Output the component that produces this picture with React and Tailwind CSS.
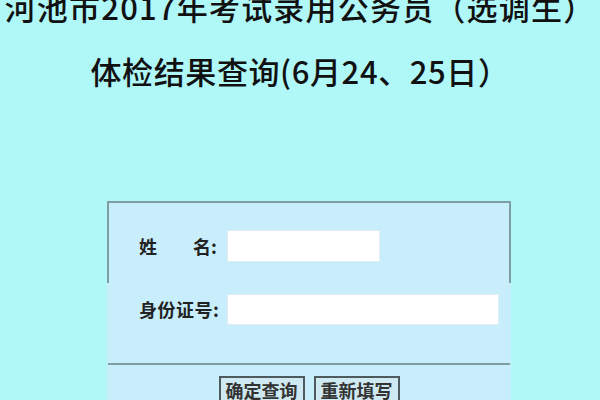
import React from "react";

const cjk = { fontFamily: '"Noto Sans CJK SC", "Noto Sans", sans-serif' };

export default function App() {
  return (
    <div
      className="w-[600px] h-[400px] overflow-hidden bg-[#b0f7f8] text-[#111]"
      style={cjk}
    >
      {/* Title */}
      <div className="-mt-[25px] text-center text-[31px] leading-[64px] font-medium">
        <p className="whitespace-nowrap tracking-[1.2px]">河池市2017年考试录用公务员（选调生）</p>
        <p className="whitespace-nowrap tracking-[0.6px]">体检结果查询(6月24、25日）</p>
      </div>

      {/* Query panel */}
      <div className="ml-[107px] mt-[98px] w-[404px] bg-[#c8eefb]">
        <div className="h-[82px] border-t-2 border-x-2 border-[#7f9ea4] pt-[27px] pl-[30px]">
          <div className="flex items-center">
            <span className="w-[88px] text-[18px] font-bold text-[#222] whitespace-pre">
              姓　　名:
            </span>
            <input
              type="text"
              className="w-[153px] h-[32px] bg-white border border-[#e3edf1] outline-none"
            />
          </div>
        </div>

        <div className="flex items-center pl-[32px] pt-[11px]">
          <span className="w-[88px] text-[18px] font-bold text-[#222] tracking-[0.5px]">身份证号:</span>
          <input
            type="text"
            className="w-[272px] h-[31px] bg-white border border-[#e3edf1] outline-none"
          />
        </div>

        <div className="mt-[38px] mx-[1px] h-[2px] bg-[#7f9ea4]"></div>

        <div className="flex justify-center gap-[9px] pt-[11px] pb-4">
          <button className="h-[28px] px-[5px] border-2 border-[#4d5a5e] bg-[#cfe9f2] text-[18px] font-bold text-[#333] leading-none">
            确定查询
          </button>
          <button className="h-[28px] px-[5px] border-2 border-[#4d5a5e] bg-[#cfe9f2] text-[18px] font-bold text-[#333] leading-none">
            重新填写
          </button>
        </div>
      </div>
    </div>
  );
}
